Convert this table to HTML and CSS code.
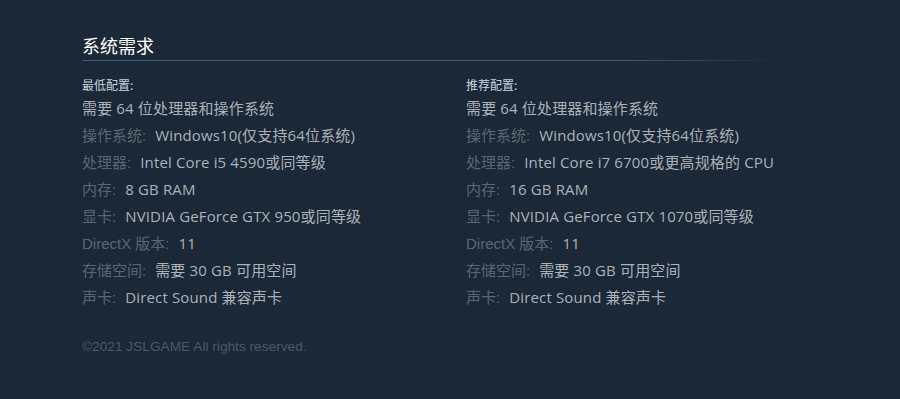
FILE: index.html
```html
<!DOCTYPE html>
<html lang="zh">
<head>
<meta charset="utf-8">
<link rel="stylesheet" href="styles.css">
</head>
<body>
<div class="page">
  <h2 class="title">系统需求</h2>
  <div class="cols">
    <div class="col">
      <div class="head">最低配置:</div>
      <ul class="list">
        <li class="row">需要 64 位处理器和操作系统</li>
        <li class="row"><span class="lbl">操作系统:</span> Windows10(仅支持64位系统)</li>
        <li class="row"><span class="lbl">处理器:</span> Intel Core i5 4590或同等级</li>
        <li class="row"><span class="lbl">内存:</span> 8 GB RAM</li>
        <li class="row"><span class="lbl">显卡:</span> NVIDIA GeForce GTX 950或同等级</li>
        <li class="row"><span class="lbl">DirectX 版本:</span> 11</li>
        <li class="row"><span class="lbl">存储空间:</span> 需要 30 GB 可用空间</li>
        <li class="row"><span class="lbl">声卡:</span> Direct Sound 兼容声卡</li>
      </ul>
    </div>
    <div class="col">
      <div class="head">推荐配置:</div>
      <ul class="list">
        <li class="row">需要 64 位处理器和操作系统</li>
        <li class="row"><span class="lbl">操作系统:</span> Windows10(仅支持64位系统)</li>
        <li class="row"><span class="lbl">处理器:</span> Intel Core i7 6700或更高规格的 CPU</li>
        <li class="row"><span class="lbl">内存:</span> 16 GB RAM</li>
        <li class="row"><span class="lbl">显卡:</span> NVIDIA GeForce GTX 1070或同等级</li>
        <li class="row"><span class="lbl">DirectX 版本:</span> 11</li>
        <li class="row"><span class="lbl">存储空间:</span> 需要 30 GB 可用空间</li>
        <li class="row"><span class="lbl">声卡:</span> Direct Sound 兼容声卡</li>
      </ul>
    </div>
  </div>
  <p class="copy">©2021 JSLGAME All rights reserved.</p>
</div>
</body>
</html>
```
FILE: styles.css
```css
html, body {
  margin: 0;
  padding: 0;
  background: #1b2838;
  height: 100%;
}
.page {
  padding: 33px 0 0 82px;
  width: 736px;
  font-family: "Open Sans", "Noto Sans CJK SC", sans-serif;
}
.title {
  margin: 0;
  font-size: 18px;
  font-weight: normal;
  color: #ffffff;
  line-height: 24px;
  padding-bottom: 3px;
  font-family: "Noto Sans CJK SC", sans-serif;
  border-bottom: 1px solid transparent;
  border-image: linear-gradient(to right, #3b5a72 0%, #3b5a72 75%, #1b2838 95%) 1;
}
.cols {
  display: grid;
  grid-template-columns: 384px 1fr;
  margin-top: 16px;
}
.head {
  font-size: 12px;
  line-height: 16px;
  color: #c6d4df;
  font-family: "Noto Sans CJK SC", sans-serif;
  margin-bottom: 2px;
}
.list {
  list-style: none;
  margin: 0;
  padding: 0;
}
.row {
  font-size: 15px;
  line-height: 27px;
  height: 27px;
  color: #acb2b8;
  white-space: nowrap;
  letter-spacing: 0.15px;
}
.lbl {
  color: #5d6670;
  font-family: "Liberation Sans", "Noto Sans CJK SC", sans-serif;
  margin-right: 5px;
  letter-spacing: 0;
}
.copy {
  margin: 27px 0 0;
  font-size: 13.7px;
  line-height: 18px;
  color: #4b5866;
  font-family: "Liberation Sans", sans-serif;
}
```
